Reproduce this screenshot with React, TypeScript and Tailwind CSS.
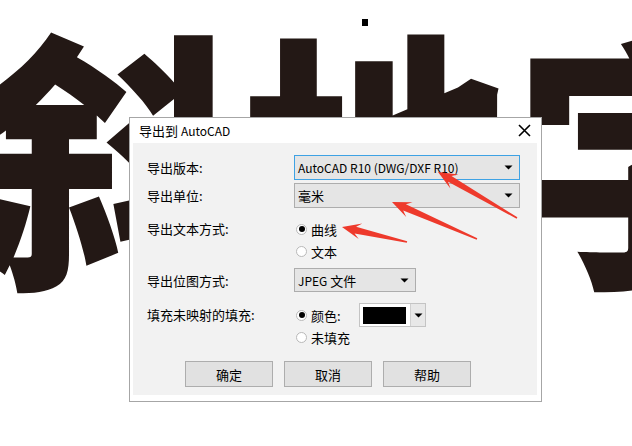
import React from "react";

const FONT = "font-['Noto_Sans_CJK_SC','Noto_Sans',sans-serif]";

function arrowPoints(tx: number, ty: number, hx: number, hy: number) {
  const dx = hx - tx;
  const dy = hy - ty;
  const L = Math.hypot(dx, dy);
  const ux = dx / L;
  const uy = dy / L;
  const nx = -uy;
  const ny = ux;
  const headLen = 19;
  const headW = 8;
  const neckW = 3.4;
  const tailW = 0.8;
  const p = (a: number, w: number) => `${(hx - ux * a + nx * w).toFixed(1)},${(hy - uy * a + ny * w).toFixed(1)}`;
  return [
    p(L, tailW),
    p(headLen * 0.72, neckW),
    p(headLen, headW),
    p(0, 0),
    p(headLen, -headW),
    p(headLen * 0.72, -neckW),
    p(L, -tailW),
  ].join(" ");
}

function Caret() {
  return (
    <svg width="9" height="5" viewBox="0 0 9 5" className="shrink-0">
      <polygon points="0.5,0.5 8.5,0.5 4.5,4.5" fill="#000" />
    </svg>
  );
}

function Select({ children, width, focused, h = 25 }: { children: React.ReactNode; width: number; focused?: boolean; h?: number }) {
  return (
    <div
      className={`flex items-center justify-between bg-[#e5e5e5] border pl-[3px] pr-[6px] ${focused ? "border-[#3ea2e4]" : "border-[#adadad]"}`}
      style={{ width, height: h }}
    >
      <span className="text-[13px] leading-none text-black whitespace-nowrap">{children}</span>
      <Caret />
    </div>
  );
}

function Radio({ checked, label }: { checked?: boolean; label: string }) {
  return (
    <div className="flex items-center h-[22px] gap-[4px] pl-[2px]">
      <div className="w-[11px] h-[11px] rounded-full border border-[#b9b9b9] bg-white flex items-center justify-center">
        {checked && <div className="w-[6px] h-[6px] rounded-full bg-black" />}
      </div>
      <span className="text-[13px] leading-none text-black">{label}</span>
    </div>
  );
}

function Button({ label }: { label: string }) {
  return (
    <div className="w-[88px] h-[26px] border border-[#adadad] bg-[#e1e1e1] flex items-center justify-center text-[13px] leading-none text-black">
      {label}
    </div>
  );
}

export default function App() {
  return (
    <div className={`relative w-[632px] h-[446px] overflow-hidden bg-white ${FONT}`}>
      {/* background large characters */}
      <div className="absolute left-[-30px] top-[12px] text-[272px] leading-none font-black text-[#231815] whitespace-nowrap font-['Noto_Sans_CJK_SC',sans-serif]">
        斜地字
      </div>
      <div className="absolute left-[362px] top-[19px] w-[6px] h-[7px] bg-black" />

      {/* dialog */}
      <div className="absolute left-[129px] top-[117px] w-[413px] h-[285px] border border-[#a6a6a6] bg-white flex flex-col">
        <div className="h-[25px] shrink-0 flex items-center justify-between pl-[9px] pr-[10px]">
          <span className="text-[13px] text-black leading-none">
            导出到 <span className="text-[12px]">AutoCAD</span>
          </span>
          <svg width="13" height="13" viewBox="0 0 13 13">
            <path d="M1 1 L12 12 M12 1 L1 12" stroke="#000" strokeWidth="1.6" />
          </svg>
        </div>
        <div className="flex-1 ml-[3px] mr-[4px] mb-[6px] bg-[#f2f2f2] pl-[14px] pt-[12px] flex flex-col">
          <div className="flex items-center h-[25px]">
            <div className="w-[147px] text-[13px] leading-none text-black">导出版本:</div>
            <Select width={226} focused>
              <span className="text-[12px]">AutoCAD R10 (DWG/DXF R10)</span>
            </Select>
          </div>
          <div className="flex items-center h-[25px] mt-[3px]">
            <div className="w-[147px] text-[13px] leading-none text-black">导出单位:</div>
            <Select width={226}>毫米</Select>
          </div>
          <div className="flex mt-[10px]">
            <div className="w-[147px] h-[20px] flex items-center text-[13px] leading-none text-black">导出文本方式:</div>
            <div className="flex flex-col">
              <Radio checked label="曲线" />
              <Radio label="文本" />
            </div>
          </div>
          <div className="flex items-center h-[24px] mt-[6px]">
            <div className="w-[147px] text-[13px] leading-none text-black">导出位图方式:</div>
            <Select width={122} h={24}>
              <span className="text-[12px]">JPEG</span> 文件
            </Select>
          </div>
          <div className="flex mt-[12px]">
            <div className="w-[147px] h-[20px] flex items-center text-[13px] leading-none text-black">填充未映射的填充:</div>
            <div className="flex flex-col">
              <div className="flex items-center h-[22px]">
                <div className="w-[65px]">
                  <Radio checked label="颜色:" />
                </div>
                <div className="w-[67px] h-[24px] border border-[#c4c4c4] bg-white flex items-center">
                  <div className="ml-[3px] w-[43px] h-[17px] bg-black" />
                  <div className="ml-[4px] flex-1 h-full bg-[#e8e8e8] border-l border-[#d0d0d0] flex items-center justify-center">
                    <Caret />
                  </div>
                </div>
              </div>
              <Radio label="未填充" />
            </div>
          </div>
          <div className="flex gap-[11px] pl-[38px] mt-[13px]">
            <Button label="确定" />
            <Button label="取消" />
            <Button label="帮助" />
          </div>
        </div>
      </div>

      {/* red annotation arrows */}
      <svg className="absolute inset-0 pointer-events-none" width="632" height="446" viewBox="0 0 632 446">
        <polygon points={arrowPoints(517, 218, 438, 172)} fill="#ee3a2c" />
        <polygon points={arrowPoints(477, 239, 392, 202)} fill="#ee3a2c" />
        <polygon points={arrowPoints(407, 242, 342, 227)} fill="#ee3a2c" />
      </svg>
    </div>
  );
}
